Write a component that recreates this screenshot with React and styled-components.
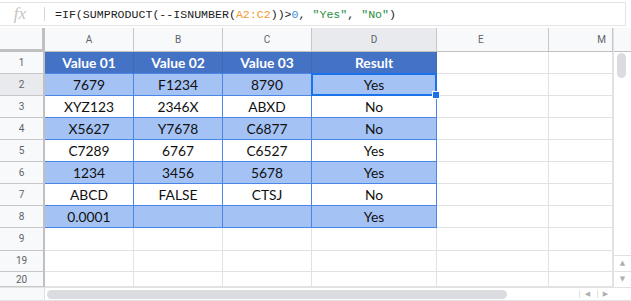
import styled, { createGlobalStyle } from "styled-components";

const GlobalStyle = createGlobalStyle`
  html, body {
    margin: 0;
    padding: 0;
    background: #ffffff;
    overflow: hidden;
  }
`;

const Page = styled.div`
  width: 631px;
  height: 301px;
  display: flex;
  flex-direction: column;
  background: #ffffff;
  overflow: hidden;
`;

const FormulaBar = styled.div`
  margin-top: 2px;
  width: 625px;
  height: 22px;
  display: flex;
  align-items: center;
  border-top: 1px solid #e3e3e3;
  border-right: 1px solid #e3e3e3;
  border-bottom: 1px solid #e3e3e3;
  margin-bottom: 2px;
`;

const Fx = styled.div`
  width: 45px;
  height: 14px;
  display: flex;
  align-items: center;
  justify-content: center;
  border-right: 1px solid #d5d5d5;
  box-sizing: border-box;
  color: #c4c4c4;
  font-family: "Liberation Serif", serif;
  font-style: italic;
  font-size: 17px;
  padding-right: 4px;
`;

const Formula = styled.div`
  padding-left: 10px;
  font-family: "Liberation Mono", "DejaVu Sans Mono", monospace;
  font-size: 11.6px;
  color: #222222;
  white-space: pre;
`;

const Tok = styled.span`
  color: ${(p) => p.$c};
`;

const Sheet = styled.div`
  display: flex;
  height: 259px;
`;

const Grid = styled.div`
  width: 613px;
  height: 259px;
  overflow: hidden;
  display: grid;
  grid-template-columns: 45px 89px 89px 89px 125px 112px 64px;
  grid-template-rows: 24px repeat(8, 22px) 23px 21px 15px;
  font-family: Lato, "Open Sans", sans-serif;
`;

const Corner = styled.div`
  background: #f8f9fa;
  border-right: 3px solid #c0c0c0;
  border-bottom: 3px solid #c0c0c0;
  box-sizing: border-box;
`;

const ColHead = styled.div`
  box-sizing: border-box;
  background: ${(p) => (p.$sel ? "#e8eaed" : "#f8f9fa")};
  border-right: 1px solid #c7c7c7;
  border-bottom: 1px solid #c0c0c0;
  display: flex;
  align-items: center;
  justify-content: ${(p) => p.$justify || "center"};
  padding: ${(p) => p.$pad || "0"};
  color: #5f6368;
  font-family: Roboto, "Liberation Sans", sans-serif;
  font-size: 10px;
`;

const RowHead = styled.div`
  box-sizing: border-box;
  background: ${(p) => (p.$sel ? "#e8eaed" : "#f8f9fa")};
  border-right: 2px solid #c0c0c0;
  border-bottom: 1px solid #c7c7c7;
  display: flex;
  align-items: ${(p) => (p.$bottom ? "flex-end" : "center")};
  justify-content: center;
  color: #5f6368;
  font-family: Roboto, "Liberation Sans", sans-serif;
  font-size: 10px;
  line-height: 12px;
`;

const Cell = styled.div`
  position: relative;
  box-sizing: border-box;
  border-right: 1px solid ${(p) => (p.$table ? "#4a86e8" : "#e2e2e3")};
  border-bottom: 1px solid ${(p) => (p.$table ? "#4a86e8" : "#e2e2e3")};
  background: ${(p) => p.$bg || "#ffffff"};
  display: flex;
  align-items: center;
  justify-content: center;
  font-size: 13.8px;
  color: #111111;
  white-space: nowrap;
`;

const HeadCell = styled(Cell)`
  background: #4472c4;
  border-right: 1px solid #3f69b5;
  border-bottom: 1px solid #4a86e8;
  color: #ffffff;
  font-weight: 700;
`;

const Selection = styled.div`
  position: absolute;
  z-index: 3;
  inset: -1px -1px -1px -1px;
  border: 2px solid #1a73e8;
  pointer-events: none;
`;

const Handle = styled.div`
  position: absolute;
  right: -5px;
  bottom: -5px;
  width: 6px;
  height: 6px;
  background: #1a73e8;
  border: 1px solid #ffffff;
`;

const VScroll = styled.div`
  width: 18px;
  display: flex;
  flex-direction: column;
  border-left: 1px solid #e2e2e3;
  box-sizing: border-box;
`;

const VScrollHead = styled.div`
  height: 24px;
  background: #f8f9fa;
  border-bottom: 1px solid #c0c0c0;
  box-sizing: border-box;
  flex-shrink: 0;
`;

const VTrack = styled.div`
  flex: 1;
  display: flex;
  flex-direction: column;
  align-items: center;
  padding-top: 1px;
`;

const VThumb = styled.div`
  width: 9px;
  height: 25px;
  border-radius: 5px;
  background: #dadce0;
  margin-right: 3px;
`;

const Arrow = styled.div`
  color: #b0b0b0;
  font-size: 7px;
  line-height: 15px;
  height: 15px;
  width: 17px;
  text-align: center;
  border-top: ${(p) => (p.$line ? "1px solid #e2e2e3" : "none")};
  font-family: "DejaVu Sans", sans-serif;
`;

const Spacer = styled.div`
  flex: 1;
`;

const HScroll = styled.div`
  height: 12px;
  display: flex;
  align-items: center;
  border-top: 1px solid #e2e2e3;
`;

const HLead = styled.div`
  width: 45px;
  height: 100%;
  background: #f8f9fa;
  border-right: 1px solid #e2e2e3;
  box-sizing: border-box;
`;

const HTrack = styled.div`
  flex: 1;
  display: flex;
  align-items: center;
  padding-left: 2px;
  height: 100%;
`;

const HThumb = styled.div`
  width: 460px;
  height: 9px;
  border-radius: 5px;
  background: #dadce0;
`;

const HArrows = styled.div`
  display: flex;
  gap: 2px;
  margin-right: 18px;
  color: #b0b0b0;
  font-size: 7px;
  font-family: "DejaVu Sans", sans-serif;
`;

const HArrow = styled.span`
  width: 15px;
  text-align: center;
  border-left: ${(p) => (p.$line ? "1px solid #e2e2e3" : "none")};
`;

const TabBar = styled.div`
  flex: 1;
  background: #f1f3f4;
  border-top: 1px solid #e2e2e3;
`;

const header = ["Value 01", "Value 02", "Value 03", "Result"];
const data = [
  ["7679", "F1234", "8790", "Yes"],
  ["XYZ123", "2346X", "ABXD", "No"],
  ["X5627", "Y7678", "C6877", "No"],
  ["C7289", "6767", "C6527", "Yes"],
  ["1234", "3456", "5678", "Yes"],
  ["ABCD", "FALSE", "CTSJ", "No"],
  ["0.0001", "", "", "Yes"],
];
const emptyRows = ["9", "19", "20"];

export default function App() {
  return (
    <Page>
      <GlobalStyle />
      <FormulaBar>
        <Fx>fx</Fx>
        <Formula>
          =IF(SUMPRODUCT(--ISNUMBER(<Tok $c="#f29b30">A2:C2</Tok>))&gt;
          <Tok $c="#3c8fd6">0</Tok>, <Tok $c="#1e8e3e">"Yes"</Tok>,{" "}
          <Tok $c="#1e8e3e">"No"</Tok>)
        </Formula>
      </FormulaBar>
      <Sheet>
        <Grid>
          <Corner />
          <ColHead>A</ColHead>
          <ColHead>B</ColHead>
          <ColHead>C</ColHead>
          <ColHead $sel>D</ColHead>
          <ColHead $justify="flex-start" $pad="0 0 0 41px">
            E
          </ColHead>
          <ColHead $justify="flex-end" $pad="0 6px 0 0">
            M
          </ColHead>

          <RowHead>1</RowHead>
          {header.map((h) => (
            <HeadCell key={h} $table>
              {h}
            </HeadCell>
          ))}
          <Cell />
          <Cell />

          {data.map((row, i) => (
            <>
              <RowHead key={"h" + i} $sel={i === 0}>
                {i + 2}
              </RowHead>
              {row.map((v, j) => (
                <Cell
                  key={i + "-" + j}
                  $table
                  $bg={i % 2 === 0 ? "#a4c2f4" : "#ffffff"}
                >
                  {v}
                  {i === 0 && j === 3 && (
                    <Selection>
                      <Handle />
                    </Selection>
                  )}
                </Cell>
              ))}
              <Cell key={"e" + i} />
              <Cell key={"m" + i} />
            </>
          ))}

          {emptyRows.map((n) => (
            <>
              <RowHead key={"r" + n} $bottom={n === "20"}>
                {n}
              </RowHead>
              {[0, 1, 2, 3, 4, 5].map((k) => (
                <Cell key={n + "-" + k} />
              ))}
            </>
          ))}
        </Grid>
        <VScroll>
          <VScrollHead />
          <VTrack>
            <VThumb />
            <Spacer />
            <Arrow $line>▲</Arrow>
            <Arrow $line>▼</Arrow>
          </VTrack>
        </VScroll>
      </Sheet>
      <HScroll>
        <HLead />
        <HTrack>
          <HThumb />
          <Spacer />
          <HArrows>
            <HArrow $line>◀</HArrow>
            <HArrow $line>▶</HArrow>
          </HArrows>
        </HTrack>
      </HScroll>
      <TabBar />
    </Page>
  );
}
